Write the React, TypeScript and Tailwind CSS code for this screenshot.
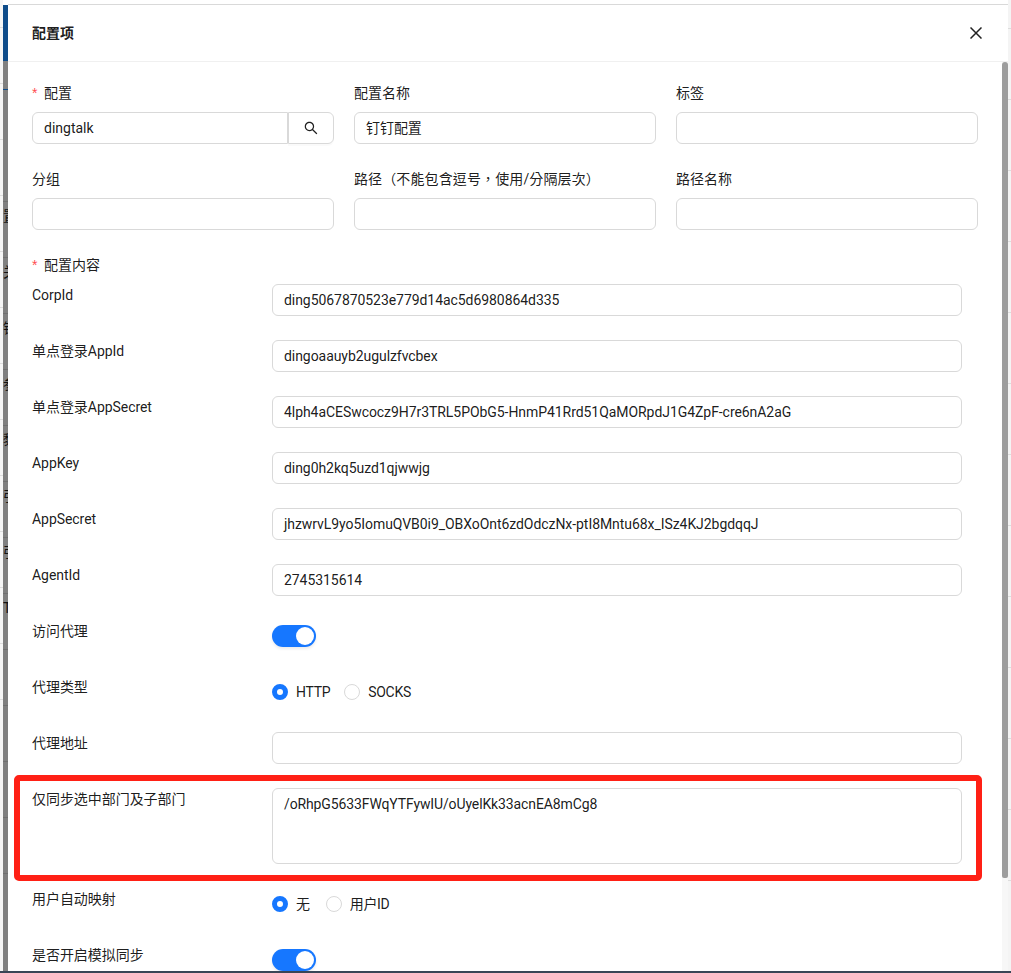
import React from "react";

const FONT = "font-['Roboto','Noto_Sans_CJK_SC',sans-serif]";

const rows = [
  { label: "CorpId", value: "ding5067870523e779d14ac5d6980864d335" },
  { label: "单点登录AppId", value: "dingoaauyb2ugulzfvcbex" },
  { label: "单点登录AppSecret", value: "4lph4aCESwcocz9H7r3TRL5PObG5-HnmP41Rrd51QaMORpdJ1G4ZpF-cre6nA2aG" },
  { label: "AppKey", value: "ding0h2kq5uzd1qjwwjg" },
  { label: "AppSecret", value: "jhzwrvL9yo5IomuQVB0i9_OBXoOnt6zdOdczNx-ptI8Mntu68x_ISz4KJ2bgdqqJ" },
  { label: "AgentId", value: "2745315614" },
];

// bits of the page behind the mask that show at the left edge
const behind = ["置", "关", "钱", "参", "黎", "引", "引", "T", "", "", "", "", ""];

function Box({ value = "", className = "" }: { value?: string; className?: string }) {
  return (
    <div className={`h-8 border border-[#d9d9d9] rounded-md bg-white px-[11px] leading-[30px] text-[14px] tracking-[-0.06px] text-black/90 whitespace-nowrap ${className}`}>
      {value}
    </div>
  );
}

function Label({ text, required }: { text: string; required?: boolean }) {
  return (
    <div className="h-[22px] leading-[22px] text-[14px] text-black/90 flex items-center">
      {required && <span className="text-[#ff4d4f] w-[12px] text-[14px] leading-[22px] font-['Liberation_Sans']">*</span>}
      <span>{text}</span>
    </div>
  );
}

function Switch() {
  return (
    <div className="h-8 flex items-center">
      <div className="w-11 h-[22px] rounded-full bg-[#1677ff] flex items-center justify-end pr-[2px] shadow-[0_2px_3px_rgba(0,0,0,0.08)]">
        <div className="w-[18px] h-[18px] rounded-full bg-white" />
      </div>
    </div>
  );
}

function Radio({ text, checked, className = "" }: { text: string; checked?: boolean; className?: string }) {
  return (
    <div className={`flex items-center h-[22px] leading-[22px] ${className}`}>
      {checked ? (
        <span className="w-4 h-4 rounded-full border-[5px] border-[#1677ff] bg-white" />
      ) : (
        <span className="w-4 h-4 rounded-full border border-[#d9d9d9] bg-white" />
      )}
      <span className="pl-2 text-[14px] tracking-[-0.3px] text-black/90">{text}</span>
    </div>
  );
}

function Row({ label, children }: { label: string; children: React.ReactNode }) {
  return (
    <div className="flex mb-6">
      <div className="w-[240px] shrink-0 tracking-[-0.05px]">
        <Label text={label} />
      </div>
      <div className="flex-1 min-w-0">{children}</div>
    </div>
  );
}

function TopField({ label, required, children, labelClass = "" }: { label: string; required?: boolean; children?: React.ReactNode; labelClass?: string }) {
  return (
    <div>
      <div className={`pb-2 ${labelClass}`}>
        <Label text={label} required={required} />
      </div>
      {children ?? <Box />}
    </div>
  );
}

export default function App() {
  return (
    <div className={`relative w-[1011px] h-[973px] overflow-hidden bg-white flex ${FONT}`}>
      {/* page behind the modal */}
      <div className="w-[3px] shrink-0 bg-[#f6f6f6] flex flex-col pt-[27px]">
        {behind.map((_, i) => (
          <div key={i} className="h-[56px] border-t border-[#dddddd]" />
        ))}
      </div>
      <div className="w-[5px] shrink-0 mt-[5px] mb-[2px] bg-[#808080] flex flex-col overflow-hidden">
        <div className="h-[56px] shrink-0 bg-[#0f4c8a]" />
        <div className="h-[29px] shrink-0 border-b border-[#0f4c8a]" />
        <div className="h-[111px] shrink-0" />
        {behind.map((ch, i) => (
          <div key={i} className="h-[56px] shrink-0 border-t border-[#707070] text-[14px] leading-[28px] text-[#111] whitespace-nowrap">
            {ch}
          </div>
        ))}
      </div>

      {/* modal */}
      <div className="w-[1000px] shrink-0 mt-[4px] mb-[2px] bg-white border-t border-[#d9d9d9] flex flex-col overflow-hidden">
        <div className="h-[57px] shrink-0 border-b border-[#f0f0f0] pl-6 pr-[26px] flex items-center justify-between">
          <span className="text-[14px] font-semibold text-black/90">配置项</span>
          <svg width="12" height="12" viewBox="0 0 12 12" fill="none" stroke="#222" strokeWidth="1.5">
            <path d="M0.5 0.5L11.5 11.5M11.5 0.5L0.5 11.5" />
          </svg>
        </div>

        <div className="flex-1 min-h-0 flex">
          <div className="flex-1 min-w-0 pl-6 pr-6 pt-5 overflow-hidden">
            <div className="grid grid-cols-3 gap-x-5 gap-y-6">
              <TopField label="配置" required>
                <div className="flex h-8">
                  <div className="flex-1 border border-[#d9d9d9] rounded-l-md px-[11px] leading-[30px] text-[14px] text-black/90">
                    dingtalk
                  </div>
                  <div className="w-[46px] border border-[#d9d9d9] rounded-r-md flex items-center justify-center shadow-[0_2px_0_rgba(0,0,0,0.02)]">
                    <svg width="14" height="14" viewBox="64 64 896 896" fill="rgba(0,0,0,0.88)">
                      <path d="M909.6 854.5L649.9 594.8C690.2 542.7 712 479 712 412c0-80.2-31.3-155.4-87.9-212.1-56.6-56.7-132-87.9-212.1-87.9s-155.5 31.3-212.1 87.9C143.2 256.5 112 331.8 112 412c0 80.1 31.3 155.5 87.9 212.1C256.5 680.8 331.8 712 412 712c67 0 130.6-21.8 182.7-62l259.7 259.6a8.2 8.2 0 0011.6 0l43.6-43.5a8.2 8.2 0 000-11.6zM570.4 570.4C528 612.7 471.8 636 412 636s-116-23.3-158.4-65.6C211.3 528 188 471.8 188 412s23.3-116.1 65.6-158.4C296 211.3 352.2 188 412 188s116.1 23.2 158.4 65.6S636 352.2 636 412s-23.3 116.1-65.6 158.4z" />
                    </svg>
                  </div>
                </div>
              </TopField>
              <TopField label="配置名称">
                <Box value="钉钉配置" />
              </TopField>
              <TopField label="标签" />
              <TopField label="分组" />
              <TopField
                label="路径（不能包含逗号，使用/分隔层次）"
                labelClass="font-['Roboto','Noto_Sans_CJK_TC',sans-serif] tracking-[0.12px]"
              />
              <TopField label="路径名称" />
            </div>

            <div className="mt-6 pb-2">
              <Label text="配置内容" required />
            </div>

            <div className="pr-4">
              {rows.map((r) => (
                <Row key={r.label} label={r.label}>
                  <Box value={r.value} />
                </Row>
              ))}
              <Row label="访问代理">
                <Switch />
              </Row>
              <Row label="代理类型">
                <div className="h-8 flex items-center">
                  <Radio text="HTTP" checked />
                  <Radio text="SOCKS" className="ml-[14px]" />
                </div>
              </Row>
              <Row label="代理地址">
                <Box />
              </Row>
              <Row label="仅同步选中部门及子部门">
                <div className="h-[76px] border border-[#d9d9d9] rounded-md px-[11px] py-1 leading-[22px] text-[14px] tracking-[-0.12px] text-black/90">
                  /oRhpG5633FWqYTFywIU/oUyelKk33acnEA8mCg8
                </div>
              </Row>
              <Row label="用户自动映射">
                <div className="h-8 flex items-center">
                  <Radio text="无" checked />
                  <Radio text="用户ID" className="ml-4" />
                </div>
              </Row>
              <Row label="是否开启模拟同步">
                <Switch />
              </Row>
            </div>
          </div>

          {/* scrollbar */}
          <div className="w-[6px] shrink-0 bg-[#f7f7f7]">
            <div className="h-[816px] bg-[#9d9d9d] rounded-t-[3px] rounded-b-[2px]" />
          </div>
        </div>
      </div>

      <div className="flex-1 bg-[#f4f4f4] flex flex-col pt-[28px]">
        {behind.map((_, i) => (
          <div key={i} className="h-[71px] border-t border-[#dddddd]" />
        ))}
      </div>

      {/* bottom edge of the screen behind */}
      <div className="absolute left-0 right-0 bottom-0 h-[2px] bg-[#3a4656]" />

      {/* red annotation round the highlighted row */}
      <div className="absolute left-[14px] top-[775px] w-[968px] h-[106px] border-[6px] border-[#ff2015] rounded-[5px]" />
    </div>
  );
}
